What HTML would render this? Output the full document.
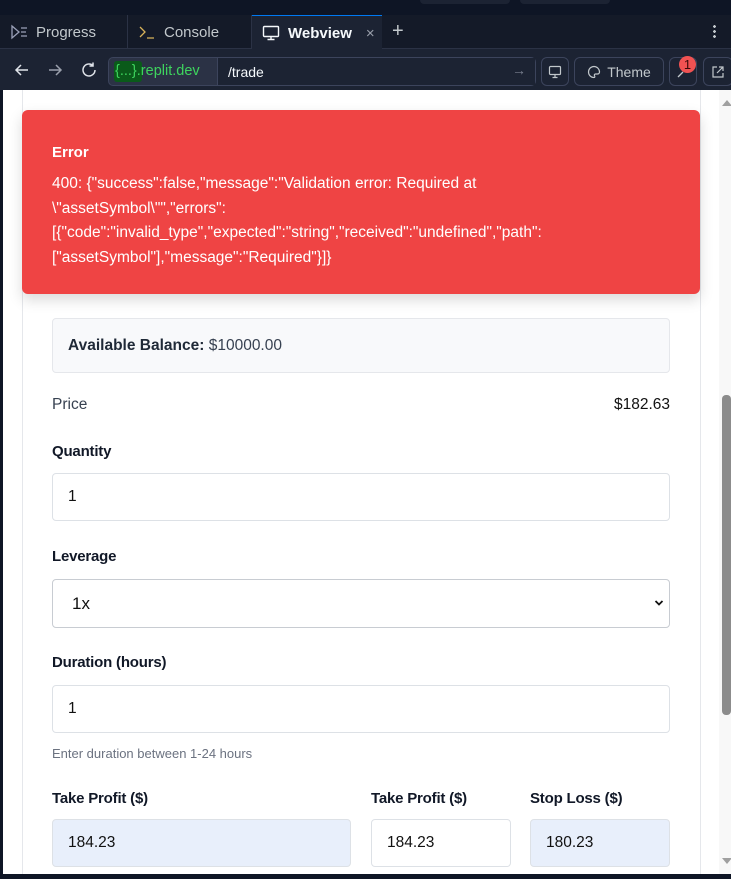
<!DOCTYPE html>
<html><head><meta charset="utf-8"><style>
*{box-sizing:border-box;margin:0;padding:0}
body{width:731px;height:879px;overflow:hidden;background:#0e1525;font-family:"Liberation Sans",sans-serif;position:relative}
.a{position:absolute}
.tab{position:absolute;top:15px;height:34px;color:#c2c8cc;font-size:15px;display:flex;align-items:center;gap:8px;padding-left:10px}
.lbl{position:absolute;left:52px;font-size:15px;font-weight:bold;color:#111827;letter-spacing:-0.2px}
.inp{position:absolute;border:1px solid #dde1e6;border-radius:4px;background:#fff;font-size:15.5px;color:#111;display:flex;align-items:center;padding-left:15px}
.blue{background:#e8effb}
.btn{position:absolute;top:57px;height:29px;border:1px solid #3c445c;border-radius:6px;color:#c2c8cc;font-size:14px;display:flex;align-items:center;justify-content:center;gap:6px}
</style></head><body>
<div class="a" style="left:420px;top:0;width:90px;height:4px;background:#1c2333;border-radius:0 0 4px 4px"></div>
<div class="a" style="left:520px;top:0;width:90px;height:4px;background:#1c2333;border-radius:0 0 4px 4px"></div>
<div class="a" style="left:0;top:15px;width:731px;height:34px;background:#141a28;border-bottom:1px solid #2b3245"></div>
<div class="tab" style="left:0;width:128px;border-right:1px solid #2b3245">
<svg width="18" height="16" viewBox="0 0 18 16" fill="none" stroke="#9aa0b8" stroke-width="1.3"><path d="M2 2l7 6-7 6zM11 4h6M11 8h5M11 12h6"/></svg>Progress</div>
<div class="tab" style="left:128px;width:124px;border-right:1px solid #2b3245">
<svg width="18" height="16" viewBox="0 0 18 16" fill="none" stroke="#d8b25a" stroke-width="1.3"><path d="M2 3l5 5-5 5M9 14h7"/></svg>Console</div>
<div class="tab" style="left:252px;width:130px;background:#1c2333;border-top:1px solid #0079f2;height:35px;color:#f5f9fc;font-weight:bold">
<svg width="18" height="16" viewBox="0 0 18 16" fill="none" stroke="#f5f9fc" stroke-width="1.4"><rect x="1.5" y="1.5" width="15" height="10" rx="1"/><path d="M9 11.5v3M5.5 14.5h7"/></svg>Webview<span style="font-weight:normal;color:#9aa0ac;margin-left:6px;font-size:15px">×</span></div>
<div class="a" style="left:392px;top:20px;color:#c2c8cc;font-size:20px">+</div>
<div class="a" style="left:713px;top:24px;width:3px;height:15px;background:radial-gradient(circle,#c2c8cc 1.3px,transparent 1.5px) 0 0/3px 5px"></div>
<div class="a" style="left:0;top:49px;width:731px;height:41px;background:#1c2333"></div>
<svg class="a" style="left:14px;top:62px" width="16" height="16" viewBox="0 0 16 16" fill="none" stroke="#e0e4ea" stroke-width="1.5"><path d="M14 8H2M7 3L2 8l5 5"/></svg>
<svg class="a" style="left:47px;top:62px" width="16" height="16" viewBox="0 0 16 16" fill="none" stroke="#9aa0ac" stroke-width="1.5"><path d="M2 8h12M9 3l5 5-5 5"/></svg>
<svg class="a" style="left:80px;top:61px" width="18" height="18" viewBox="0 0 18 18" fill="none" stroke="#e0e4ea" stroke-width="1.5"><path d="M15 9a6 6 0 1 1-2-4.5M13 1.5v3.5h-3.5"/></svg>
<div class="a" style="left:108px;top:57px;width:428px;height:29px;border:1px solid #3c445c;border-radius:5px;background:#2b3245"></div>
<div class="a" style="left:114px;top:61px;width:28px;height:21px;background:#0a5a1a;border-radius:3px"></div>
<div class="a" style="left:115px;top:63px;color:#3ed45e;font-size:14.5px">{...}.replit.dev</div>
<div class="a" style="left:217px;top:58px;width:318px;height:27px;background:#1c2333;border-left:1px solid #3c445c"></div>
<div class="a" style="left:228px;top:64px;color:#f5f9fc;font-size:14px">/trade</div>
<div class="a" style="left:512px;top:62px;color:#7a8090;font-size:14px">→</div>
<div class="btn" style="left:541px;width:28px"><svg width="14" height="14" viewBox="0 0 14 14" fill="none" stroke="#c2c8cc" stroke-width="1.2"><rect x="1.5" y="1.5" width="11" height="8" rx="1"/><path d="M7 9.5v3M4.5 12.5h5"/></svg></div>
<div class="btn" style="left:574px;width:90px"><svg width="14" height="14" viewBox="0 0 14 14" fill="none" stroke="#c2c8cc" stroke-width="1.2"><path d="M7 1.5a5.5 5.5 0 1 0 0 11c1 0 1-1 .5-1.8s0-1.7 1-1.7h2a2 2 0 0 0 2-2C12.5 4 10 1.5 7 1.5z"/></svg>Theme</div>
<div class="btn" style="left:669px;width:28px"><svg width="14" height="14" viewBox="0 0 14 14" fill="none" stroke="#c2c8cc" stroke-width="1.3"><path d="M2 12l5-5"/></svg></div>
<div class="a" style="left:679px;top:56px;width:17px;height:17px;border-radius:50%;background:#f05252;color:#3a0a0a;font-size:13px;text-align:center;line-height:17px">1</div>
<div class="btn" style="left:703px;width:30px"><svg width="14" height="14" viewBox="0 0 14 14" fill="none" stroke="#c2c8cc" stroke-width="1.2"><path d="M6 2H2v10h10V8M8 2h4v4M12 2L6 8"/></svg></div>

<div class="a" style="left:3px;top:90px;width:728px;height:784px;background:#fff"></div>
<div class="a" style="left:22px;top:90px;width:1px;height:784px;background:#e5e7eb"></div>
<div class="a" style="left:700px;top:90px;width:1px;height:784px;background:#e5e7eb"></div>
<div class="a" style="left:719px;top:90px;width:12px;height:784px;background:#f8f8f8"></div>
<div class="a" style="left:722px;top:100px;width:0;height:0;border-left:5px solid transparent;border-right:5px solid transparent;border-bottom:6px solid #a0a0a0"></div>
<div class="a" style="left:722px;top:395px;width:9px;height:320px;background:#8c8c8c;border-radius:4px"></div>
<div class="a" style="left:722px;top:858px;width:0;height:0;border-left:5px solid transparent;border-right:5px solid transparent;border-top:6px solid #a0a0a0"></div>

<div class="a" style="left:22px;top:110px;width:678px;height:184px;background:#ef4444;border-radius:6px;box-shadow:0 6px 14px rgba(0,0,0,.15)"></div>
<div class="a" style="left:52px;top:144px;color:#fff;font-weight:bold;font-size:15px">Error</div>
<div class="a" style="left:52px;top:172px;width:600px;color:#fff;font-size:15.5px;line-height:24.5px">400: {"success":false,"message":"Validation error: Required at \"assetSymbol\"","errors":<br>[{"code":"invalid_type","expected":"string","received":"undefined","path":<br>["assetSymbol"],"message":"Required"}]}</div>

<div class="a" style="left:52px;top:318px;width:618px;height:55px;background:#f8f9fb;border:1px solid #e5e7eb;border-radius:4px;font-size:15.5px;color:#374151;padding:18px 0 0 15px"><b style="color:#1f2937">Available Balance:</b> $10000.00</div>
<div class="a" style="left:52px;top:396px;font-size:15.5px;color:#374151">Price</div>
<div class="a" style="right:61px;top:396px;font-size:15.5px;color:#111">$182.63</div>

<div class="lbl" style="top:443px">Quantity</div>
<div class="inp" style="left:52px;top:473px;width:618px;height:48px">1</div>
<div class="lbl" style="top:548px">Leverage</div>
<div class="inp" style="left:52px;top:579px;width:618px;height:49px;border-color:#c8ccd2;padding-left:19px;font-size:17px">1x
<svg class="a" style="right:5px;top:19px" width="10" height="8" viewBox="0 0 10 8" fill="none" stroke="#111" stroke-width="1.8"><path d="M1.5 2l3.5 3.5L8.5 2"/></svg></div>
<div class="lbl" style="top:654px">Duration (hours)</div>
<div class="inp" style="left:52px;top:685px;width:618px;height:48px">1</div>
<div class="a" style="left:52px;top:746px;font-size:13px;color:#6b7280">Enter duration between 1-24 hours</div>

<div class="lbl" style="top:790px">Take Profit ($)</div>
<div class="lbl" style="top:790px;left:371px">Take Profit ($)</div>
<div class="lbl" style="top:790px;left:530px">Stop Loss ($)</div>
<div class="inp blue" style="left:52px;top:819px;width:299px;height:48px">184.23</div>
<div class="inp" style="left:371px;top:819px;width:140px;height:48px">184.23</div>
<div class="inp blue" style="left:530px;top:819px;width:140px;height:48px">180.23</div>
<div class="a" style="left:0;top:874px;width:731px;height:5px;background:#0e1525"></div>
</body></html>
